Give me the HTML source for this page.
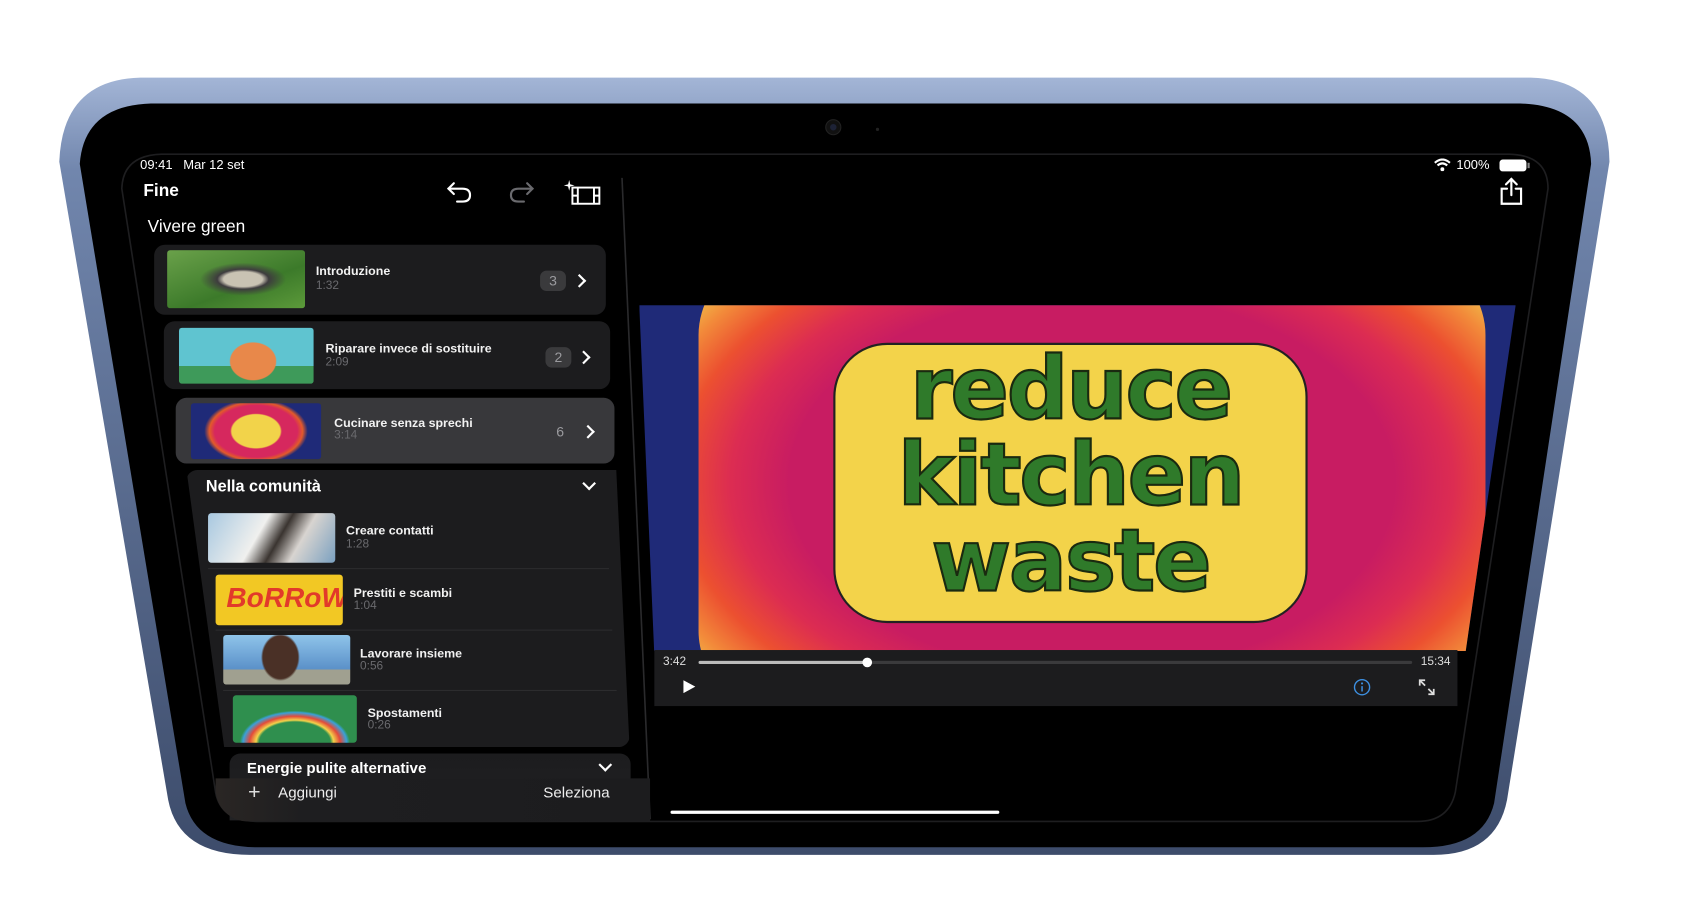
<!DOCTYPE html>
<html><head><meta charset="utf-8"><style>
*{margin:0;padding:0;box-sizing:border-box}
html,body{width:1689px;height:923px;overflow:hidden;background:#fff;font-family:"Liberation Sans",sans-serif}
#w{position:absolute;left:0;top:0;width:1567px;height:857px;transform:scale(1.078);transform-origin:0 0}
.a{position:absolute}
.t{position:absolute;color:#fff;white-space:nowrap}
.card{position:absolute;background:#1c1c1e;border-radius:10px}
.th{position:absolute;border-radius:3px;overflow:hidden}
.ti{font-size:11.5px;font-weight:bold;color:#f2f2f2}
.sub{font-size:11px;color:#6a6a6e}
.badge{position:absolute;width:24px;height:19px;border-radius:6px;background:#3a3a3c;color:#9a9a9e;font-size:13px;text-align:center;line-height:19px}
.chev{position:absolute;width:9px;height:9px;border-right:2.2px solid #fff;border-top:2.2px solid #fff;transform:rotate(45deg)}
.dchev{position:absolute;width:9px;height:9px;border-right:2px solid #fff;border-bottom:2px solid #fff;transform:rotate(45deg)}
.sep{position:absolute;height:1px;background:#2c2c2e}
</style></head><body><div id="w">
<svg class="a" style="left:0;top:0" width="1567" height="857">
<defs><linearGradient id="fr" x1="0" y1="0" x2="0" y2="1"><stop offset="0" stop-color="#a3b5d6"/><stop offset="0.12" stop-color="#7186ad"/><stop offset="1" stop-color="#3d4c6b"/></linearGradient></defs>
<rect x="178" y="79" width="58" height="8" rx="4" fill="#8ea2c6"/>
<rect x="249" y="79" width="58" height="8" rx="4" fill="#8ea2c6"/>
<path d="M130 72 L1420 72 Q1492 74 1493 150 L1398 742 Q1388 793 1330 793 L232 793 Q166 793 156 742 L55 150 Q58 74 130 72 Z" fill="url(#fr)"/>
<path d="M140 96 L1410 96 Q1474 98 1476 152 L1386 745 Q1376 786 1320 786 L240 786 Q182 786 172 745 L74 152 Q78 98 140 96 Z" fill="#000"/>
<path d="M150 143 L1400 143 Q1436 144 1436 175 L1350 735 Q1344 762 1315 762 L240 762 Q205 762 200 735 L113 175 Q114 144 150 143 Z" fill="#000" stroke="#1e1e20" stroke-width="1.5"/>
<circle cx="773" cy="118" r="7" fill="#111" stroke="#222"/><circle cx="773" cy="118" r="3" fill="#1d2236"/>
<circle cx="814" cy="120" r="1.5" fill="#222"/>
<line x1="577" y1="165" x2="603" y2="760" stroke="#2a2a2c" stroke-width="1.5"/>
</svg>
<div class="t" style="left:130px;top:146px;font-size:12px">09:41&nbsp;&nbsp; Mar 12 set</div>
<svg class="a" style="left:1330px;top:147px" width="16" height="12" viewBox="0 0 16 12"><path d="M1 4 Q8 -2 15 4" stroke="#fff" stroke-width="2" fill="none"/><path d="M3.5 6.5 Q8 2.5 12.5 6.5" stroke="#fff" stroke-width="2" fill="none"/><circle cx="8" cy="10" r="1.8" fill="#fff"/></svg>
<div class="t" style="left:1351px;top:146px;font-size:12px">100%</div>
<div class="a" style="left:1391px;top:148px;width:25px;height:11px;border-radius:3px;background:#fff"></div>
<div class="a" style="left:1417px;top:151px;width:2px;height:5px;background:#888"></div>
<div class="t" style="left:133px;top:169px;font-size:16px;font-weight:bold">Fine</div>
<svg class="a" style="left:412px;top:166px" width="30" height="24" viewBox="0 0 30 24" fill="none" stroke="#fff" stroke-width="2" stroke-linecap="round"><path d="M9 4 L4 9 L9 14"/><path d="M4 9 H17 Q24 9 24 15 Q24 21 17 21 H12"/></svg>
<svg class="a" style="left:468px;top:166px" width="30" height="24" viewBox="0 0 30 24" fill="none" stroke="#6a6a6e" stroke-width="2" stroke-linecap="round"><path d="M21 4 L26 9 L21 14"/><path d="M26 9 H13 Q6 9 6 15 Q6 21 13 21 H18"/></svg>
<svg class="a" style="left:521px;top:165px" width="38" height="26" viewBox="0 0 38 26" fill="none" stroke="#fff" stroke-width="1.8"><path d="M7 2 L8 6 L12 7 L8 8 L7 12 L6 8 L2 7 L6 6 Z" fill="#fff" stroke="none"/><rect x="10" y="9" width="25" height="15"/><line x1="15" y1="9" x2="15" y2="24"/><line x1="30" y1="9" x2="30" y2="24"/><line x1="10" y1="16.5" x2="15" y2="16.5"/><line x1="30" y1="16.5" x2="35" y2="16.5"/></svg>
<svg class="a" style="left:1390px;top:164px" width="24" height="28" viewBox="0 0 24 28" fill="none" stroke="#fff" stroke-width="2" stroke-linecap="round"><path d="M12 2 V17"/><path d="M7 7 L12 2 L17 7"/><path d="M8 11 H3 V25 H21 V11 H16"/></svg>
<div class="t" style="left:137px;top:202px;font-size:16px">Vivere green</div>

<div class="card" style="left:143px;top:227px;width:419px;height:65px"></div>
<div class="th" style="left:155px;top:232px;width:128px;height:54px;background:radial-gradient(ellipse at 55% 50%,#c9c3b3 0 18%,#3e3c3e 24%,transparent 40%),linear-gradient(160deg,#6aa14a,#3c7a2a 60%,#5c9a3a)"></div>
<div class="t ti" style="left:293px;top:246px">Introduzione</div>
<div class="t sub" style="left:293px;top:259px">1:32</div>
<div class="badge" style="left:501px;top:251px">3</div>
<div class="chev" style="left:533px;top:256px"></div>

<div class="card" style="left:152px;top:298px;width:414px;height:63px"></div>
<div class="th" style="left:166px;top:304px;width:125px;height:52px;background:radial-gradient(ellipse 22px 18px at 55% 60%,#e8884a 0 95%,transparent 100%),linear-gradient(180deg,#5fc4d0 0 68%,#3e9a5a 68%)"></div>
<div class="t ti" style="left:302px;top:318px">Riparare invece di sostituire</div>
<div class="t sub" style="left:302px;top:330px">2:09</div>
<div class="badge" style="left:506px;top:322px">2</div>
<div class="chev" style="left:537px;top:327px"></div>

<div class="card" style="left:163px;top:369px;width:407px;height:61px;background:#38383b"></div>
<div class="th" style="left:177px;top:374px;width:121px;height:52px;background:radial-gradient(ellipse 32px 22px at 50% 50%,#f2d34a 0 70%,transparent 75%),radial-gradient(ellipse 48px 30px at 50% 50%,#d6285e 0 80%,#e35a2a 90%,transparent 100%),#1f2a78"></div>
<div class="t ti" style="left:310px;top:387px">Cucinare senza sprechi</div>
<div class="t sub" style="left:310px;top:398px">3:14</div>
<div class="t" style="left:516px;top:393px;font-size:13px;color:#9a9a9e">6</div>
<div class="chev" style="left:541px;top:396px"></div>

<div class="a" style="left:173px;top:436px;width:411px;height:257px;background:#1c1c1e;border-radius:10px;clip-path:polygon(0 0,97% 0,100% 100%,8.5% 100%)"></div>
<div class="t" style="left:191px;top:443px;font-size:15px;font-weight:bold">Nella comunità</div>
<div class="dchev" style="left:542px;top:444px"></div>
<div class="th" style="left:193px;top:476px;width:118px;height:46px;background:linear-gradient(120deg,#a8c8e0,#f0f0ee 40%,#3a3430 55%,#d8d4d0 70%,#7aa0c0)"></div>
<div class="t ti" style="left:321px;top:487px">Creare contatti</div>
<div class="t sub" style="left:321px;top:499px">1:28</div>
<div class="sep" style="left:193px;top:527px;width:372px"></div>
<div class="th" style="left:200px;top:533px;width:118px;height:47px;background:#f2c824"><div class="t" style="left:10px;top:6px;font-size:26px;font-weight:bold;color:#e23a2a;font-style:italic">BoRRoW</div></div>
<div class="t ti" style="left:328px;top:545px">Prestiti e scambi</div>
<div class="t sub" style="left:328px;top:556px">1:04</div>
<div class="sep" style="left:200px;top:584px;width:368px"></div>
<div class="th" style="left:207px;top:589px;width:118px;height:46px;background:radial-gradient(ellipse 18px 22px at 45% 45%,#4a3026 0 90%,transparent 100%),linear-gradient(180deg,#8fc4ea,#5a90c8 70%,#a0a090 70%)"></div>
<div class="t ti" style="left:334px;top:601px">Lavorare insieme</div>
<div class="t sub" style="left:334px;top:612px">0:56</div>
<div class="sep" style="left:207px;top:640px;width:365px"></div>
<div class="th" style="left:216px;top:645px;width:115px;height:44px;background:radial-gradient(ellipse 60px 35px at 50% 100%,#2f8f4e 0 55%,#f4d24a 60%,#e34a3a 70%,#3aa0d8 80%,#2f8f4e 85%)"></div>
<div class="t ti" style="left:341px;top:656px">Spostamenti</div>
<div class="t sub" style="left:341px;top:667px">0:26</div>

<div class="a" style="left:213px;top:699px;width:372px;height:62px;background:linear-gradient(180deg,#1c1c1e,#222224);border-radius:10px 10px 0 0"></div>
<div class="t" style="left:229px;top:704px;font-size:14px;font-weight:bold">Energie pulite alternative</div>
<div class="dchev" style="left:557px;top:705px"></div>
<div class="a" style="left:200px;top:722px;width:403px;height:40px;background:linear-gradient(90deg,#2a2624,#1e1e20 20%,#1c1c1e);border-radius:0 0 0 30px"></div>
<div class="t" style="left:230px;top:724px;font-size:20px;font-weight:300;color:#ddd">+</div>
<div class="t" style="left:258px;top:727px;font-size:14px;color:#eee">Aggiungi</div>
<div class="t" style="left:504px;top:727px;font-size:14px;color:#eee">Seleziona</div>

<div class="a" style="left:593px;top:283px;width:813px;height:321px;overflow:hidden;clip-path:polygon(0 0,100% 0,94.3% 100%,1.7% 100%);background:#1f2a78">
<div class="a" style="left:55px;top:-80px;width:730px;height:490px;border-radius:22%;background:radial-gradient(ellipse 62% 58% at 50% 50%,#c81c62 0 62%,#dc2c52 74%,#ec5030 85%,#f28a3a 94%,#f0b848 100%)"></div>
<div class="a" style="left:180px;top:35px;width:440px;height:260px;border-radius:50px;background:#f3d34a;border:2px solid #222"></div>
<div class="a" style="left:185px;top:38px;width:430px;font-family:'DejaVu Sans',sans-serif;font-weight:bold;font-size:80px;line-height:80px;color:#2f7a2a;text-align:center;-webkit-text-stroke:2px #1a2a10;letter-spacing:-2px">reduce<br>kitchen<br>waste</div>
</div>
<div class="a" style="left:607px;top:603px;width:745px;height:52px;background:#1c1c1e"></div>
<div class="t" style="left:615px;top:608px;font-size:11px;color:#ddd">3:42</div>
<div class="a" style="left:648px;top:613px;width:662px;height:3px;background:#3a3a3c;border-radius:2px"></div>
<div class="a" style="left:648px;top:613px;width:156px;height:3px;background:#bbb;border-radius:2px"></div>
<div class="a" style="left:800px;top:610px;width:9px;height:9px;border-radius:50%;background:#fff"></div>
<div class="t" style="left:1318px;top:608px;font-size:11px;color:#ddd">15:34</div>
<svg class="a" style="left:632px;top:630px" width="14" height="14"><path d="M2 1 L13 7 L2 13 Z" fill="#fff"/></svg>
<svg class="a" style="left:1255px;top:629px" width="17" height="17"><circle cx="8.5" cy="8.5" r="7" fill="none" stroke="#3d8fe0" stroke-width="1.3"/><circle cx="8.5" cy="5" r="1" fill="#3d8fe0"/><line x1="8.5" y1="7.5" x2="8.5" y2="12.5" stroke="#3d8fe0" stroke-width="1.4"/></svg>
<svg class="a" style="left:1315px;top:629px" width="17" height="17" fill="none" stroke="#ddd" stroke-width="1.6"><path d="M2 7 V2 H7 M2 2 L7 7 M15 10 V15 H10 M15 15 L10 10"/></svg>
<div class="a" style="left:622px;top:752px;width:305px;height:3px;border-radius:2px;background:#fff"></div>
</div></body></html>
